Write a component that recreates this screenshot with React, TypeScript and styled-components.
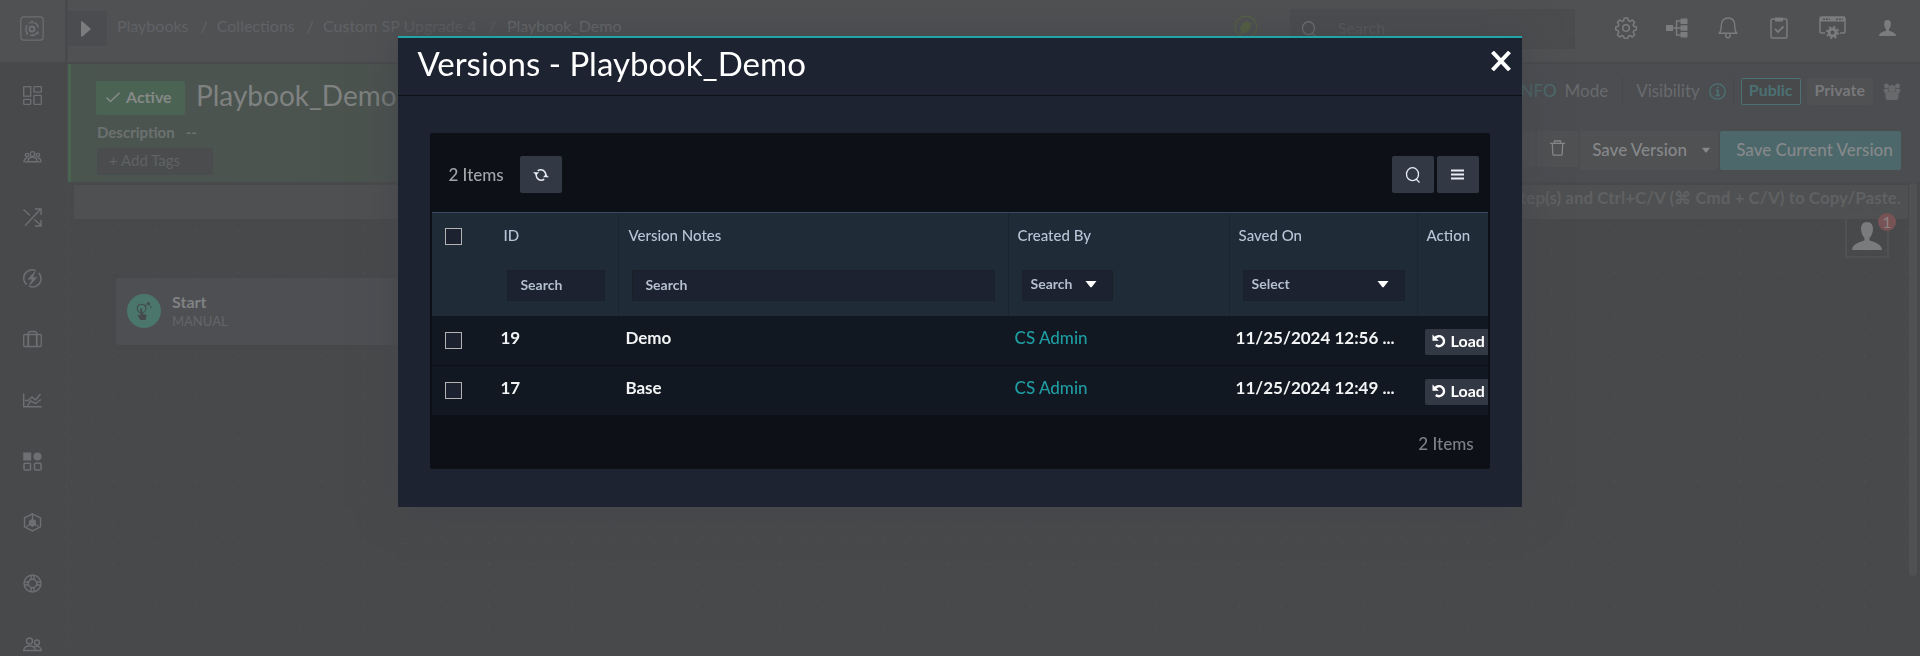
import React from "react";
import styled, { createGlobalStyle } from "styled-components";

const GlobalStyle = createGlobalStyle`
  * { box-sizing: border-box; }
  html, body, #root { height: 100%; }
  body {
    margin: 0;
    overflow: hidden;
    background: #48494b;
    color: #8b8c8e;
    font-family: Lato, "Liberation Sans", sans-serif;
    font-size: 16px;
    line-height: 20px;
  }
  button, input, select { font: inherit; color: inherit; margin: 0; }
  button { cursor: pointer; }
  svg { display: block; flex: none; }
`;

/* ---------- application frame ---------- */

const Frame = styled.div`
  display: flex;
  min-height: 100%;
  height: 100vh;
`;

const Sidebar = styled.nav`
  flex: none;
  width: 68px;
  display: flex;
  flex-direction: column;
  background: #48494b;
  border-right: 1px solid #4a4b4e;
  overflow: hidden;
`;

const LogoLink = styled.a`
  flex: none;
  display: flex;
  align-items: center;
  height: 62px;
  padding: 0 0 5px 20px;
  width: 65px;
  background: #505153;
  color: #6d6f72;
`;

const NavList = styled.ul`
  list-style: none;
  margin: 0;
  padding: 3px 0 0;
  color: #6d6f73;
`;

const NavLink = styled.a`
  display: flex;
  align-items: center;
  justify-content: center;
  width: 65px;
  height: 61px;
  color: inherit;
`;

const Main = styled.div`
  flex: 1;
  min-width: 0;
  display: flex;
  flex-direction: column;
`;

const TopBar = styled.header`
  flex: none;
  display: flex;
  align-items: flex-start;
  height: 62px;
  background: #505153;
`;

const ExpandButton = styled.button`
  display: flex;
  align-items: center;
  width: 39px;
  height: 35px;
  margin-top: 11px;
  padding: 0 0 0 13px;
  border: 0;
  border-radius: 0 2px 2px 0;
  background: #4b4c50;
  color: #7b7c7e;
`;

const Breadcrumb = styled.nav`
  display: flex;
  gap: 9px;
  margin: 16px 0 0 10px;
  color: #606265;
  white-space: nowrap;
  a { color: inherit; text-decoration: none; }
`;

const Crumb = styled.a`
  margin-right: 3px;
`;

const Current = styled.span`
  margin-left: 2px;
  color: #6c6e70;
`;

const StatusBadge = styled.span`
  margin: 15px 32px 0 auto;
  color: #586640;
`;

const GlobalSearch = styled.label`
  display: flex;
  align-items: center;
  width: 285px;
  height: 40px;
  margin-top: 9px;
  padding-left: 11px;
  border-radius: 2px;
  background: #4b4c4e;
  color: #77787a;
  input {
    width: 200px;
    margin-left: 21px;
    padding: 0 0 2px;
    border: 0;
    outline: 0;
    background: none;
  }
  input::placeholder { color: #5b5c5e; opacity: 1; }
`;

const TopIcons = styled.div`
  display: grid;
  grid-template-columns: repeat(4, 51px) 56px 54px;
  align-items: center;
  justify-items: center;
  height: 55px;
  margin: 0 6px 0 25px;
  color: #7b7c7e;
`;

const IconButton = styled.button`
  display: flex;
  padding: 0;
  border: 0;
  background: none;
  color: inherit;
`;

/* ---------- playbook header ---------- */

const Hero = styled.section`
  flex: none;
  display: flex;
  justify-content: space-between;
  height: 118px;
  margin-top: 2px;
  border-left: 3px solid #4a6451;
  background: linear-gradient(90deg, #4b5550 0, #4b534f 290px, #4c4d51 700px);
`;

const HeroInfo = styled.div`
  padding: 17px 0 0 25px;
`;

const HeroTitleRow = styled.div`
  display: flex;
  align-items: center;
  gap: 11px;
  height: 34px;
`;

const ActiveButton = styled.button`
  display: flex;
  align-items: center;
  gap: 6px;
  width: 89px;
  height: 34px;
  padding: 0 0 2px 10px;
  border: 0;
  border-radius: 2px;
  background: #4a6352;
  color: #858987;
  font-weight: 700;
`;

const HeroTitle = styled.h1`
  margin: 0;
  padding-bottom: 6px;
  color: #7f8281;
  font-size: 28px;
  line-height: 32px;
  font-weight: 400;
`;

const Description = styled.div`
  display: flex;
  gap: 11px;
  margin-top: 7px;
  padding-left: 1px;
  color: #6c716f;
  font-size: 15px;
  font-weight: 700;
`;

const TagInput = styled.input`
  display: block;
  width: 116px;
  height: 27px;
  margin: 6px 0 0 1px;
  padding: 0 0 4px 12px;
  border: 0;
  border-radius: 2px;
  background: #4a4c4d;
  font-size: 15px;
  &::placeholder { color: #606363; opacity: 1; }
`;

const HeroActions = styled.div`
  display: flex;
  flex-direction: column;
  align-items: flex-end;
  padding: 13px 19px 0 0;
`;

const ModeRow = styled.div`
  display: flex;
  align-items: center;
  height: 28px;
  color: #686a6d;
  font-size: 17px;
`;

const ModeLabel = styled.span`
  padding-right: 14px;
  border-right: 1px solid #47484b;
  line-height: 28px;
  em { margin-right: 8px; color: #4b6a6c; font-style: normal; }
`;

const VisibilityLabel = styled.span`
  display: flex;
  align-items: center;
  gap: 9px;
  height: 28px;
  padding: 0 7px 0 13px;
  border-right: 1px solid #47484b;
  svg { color: #4b7173; }
`;

const ChoiceButton = styled.button<{ $selected?: boolean }>`
  height: 27px;
  margin-left: ${(p) => (p.$selected ? 7 : 6)}px;
  padding: 0 7px 2px;
  border: 1px solid ${(p) => (p.$selected ? "#4b7173" : "#505153")};
  border-radius: 2px;
  background: ${(p) => (p.$selected ? "#48494b" : "#505153")};
  color: ${(p) => (p.$selected ? "#4b7173" : "#77787a")};
  font-size: 16px;
  font-weight: 700;
  line-height: 20px;
`;

const TeamsButton = styled(IconButton)`
  margin-left: 10px;
`;

const ActionRow = styled.div`
  display: flex;
  gap: 2px;
  margin-top: 26px;
`;

const ActionButton = styled.button<{ $primary?: boolean; $width: number }>`
  display: flex;
  align-items: center;
  justify-content: center;
  gap: 14px;
  width: ${(p) => p.$width}px;
  height: ${(p) => (p.$width < 60 ? 36 : 39)}px;
  padding: 0 0 2px;
  padding-left: ${(p) => (p.$primary ? 8 : 0)}px;
  border: 0;
  border-radius: 2px;
  background: ${(p) => (p.$primary ? "#4c686a" : "#505153")};
  color: #86888a;
  font-size: 17px;
  font-weight: 500;
  white-space: nowrap;
`;

const SaveVersionButton = styled(ActionButton)`
  justify-content: flex-end;
  padding-right: 7px;
`;

/* ---------- canvas ---------- */

const Canvas = styled.main`
  flex: 1;
  position: relative;
  min-height: 0;
  padding: 3px 12px 0 6px;
`;

const DotGrid = styled.svg`
  position: absolute;
  inset: 0;
  width: 100%;
  height: 100%;
`;

const HintBar = styled.p`
  margin: 0;
  height: 34px;
  padding: 3px 7px 0;
  background: #4f5052;
  color: #606162;
  font-size: 17px;
  font-weight: 700;
  text-align: right;
`;

const NodeCard = styled.article`
  position: absolute;
  left: 48px;
  top: 96px;
  width: 282px;
  height: 67px;
  display: flex;
  align-items: center;
  gap: 11px;
  padding: 0 0 1px 11px;
  border-radius: 2px;
  background: #4e4f53;
  box-shadow: 0 0 4px #47484a;
`;

const NodeIcon = styled.span`
  display: flex;
  align-items: center;
  justify-content: center;
  width: 34px;
  height: 34px;
  border-radius: 50%;
  background: #4a766b;
  color: #454b4b;
`;

const NodeName = styled.div`
  color: #808183;
  font-weight: 700;
`;

const NodeKind = styled.div`
  color: #636568;
  font-size: 13px;
  line-height: 18px;
`;

const UserTile = styled.button`
  position: absolute;
  right: 31px;
  top: 32px;
  width: 44px;
  height: 44px;
  display: flex;
  align-items: center;
  justify-content: center;
  padding: 0;
  border: 2px solid #505153;
  background: none;
  color: #7a7b7c;
`;

const UserCount = styled.span`
  position: absolute;
  right: -9px;
  top: -3px;
  width: 18px;
  height: 18px;
  border-radius: 50%;
  background: #775356;
  color: #8e8184;
  line-height: 18px;
  text-align: center;
`;

const ScrollThumb = styled.div`
  position: absolute;
  right: 3px;
  top: 1px;
  width: 8px;
  height: 83%;
  border-radius: 4px;
  background: #505153;
`;

/* ---------- dialog ---------- */

const Overlay = styled.div`
  position: fixed;
  inset: 0;
  padding-top: 36px;
`;

const Dialog = styled.section`
  width: 58.5%;
  min-width: 900px;
  margin: 0 auto;
  border-top: 2px solid #20a4a9;
  background: #1d2330;
  box-shadow: 0 0 36px #44464a;
`;

const DialogHeader = styled.header`
  display: flex;
  align-items: flex-start;
  justify-content: space-between;
  height: 58px;
  padding: 7px 11px 0 19px;
  border-bottom: 1px solid #0d1117;
  color: #fff;
`;

const DialogTitle = styled.h2`
  margin: 0;
  font-size: 33px;
  line-height: 36px;
  font-weight: 400;
`;

const CloseButton = styled(IconButton)`
  margin-top: 6px;
`;

const DialogBody = styled.div`
  padding: 37px 32px 38px;
`;

const Panel = styled.div`
  padding: 0 2px;
  border-radius: 2px;
  background: #0d1117;
`;

const Toolbar = styled.div`
  display: flex;
  align-items: center;
  gap: 3px;
  height: 79px;
  padding: 4px 9px 0 16px;
  color: #a3a5a8;
`;

const Count = styled.span`
  margin-right: auto;
  display: flex;
  align-items: center;
  gap: 16px;
  font-size: 17px;
  line-height: 22px;
  font-weight: 500;
`;

const ToolButton = styled.button`
  display: flex;
  align-items: center;
  justify-content: center;
  width: 42px;
  height: 37px;
  padding: 0;
  border: 0;
  border-radius: 2px;
  background: #323945;
  color: #e8eef4;
`;

const TableClip = styled.div`
  overflow: hidden;
  border-top: 1px solid #3a4a63;
`;

const Table = styled.table`
  width: 100%;
  table-layout: fixed;
  border-collapse: separate;
  border-spacing: 0;
  text-align: left;
`;

const HeadCell = styled.th<{ $line?: boolean }>`
  height: 103px;
  padding: 12px 13px 0 9px;
  border-right: 1px solid ${(p) => (p.$line ? "#1b2531" : "#202b38")};
  background: #202b38;
  color: #b8c5d7;
  font-size: 15px;
  font-weight: 500;
  line-height: 20px;
  vertical-align: top;
  white-space: nowrap;
`;

const Filter = styled.div<{ $width?: number }>`
  position: relative;
  width: ${(p) => (p.$width ? p.$width + "px" : "auto")};
  margin: 25px 0 0 4px;
  svg {
    position: absolute;
    right: 16px;
    top: 10px;
    color: #fff;
    pointer-events: none;
  }
`;

const filterBox = `
  display: block;
  width: 100%;
  height: 31px;
  border: 1px solid #1a2028;
  outline: 0;
  background: #1c2230;
  color: #b4bfd0;
  font-size: 14px;
  font-weight: 700;
`;

const FilterInput = styled.input`
  ${filterBox}
  padding: 0 0 3px 12px;
  &::placeholder { color: #b4bfd0; opacity: 1; }
`;

const FilterSelect = styled.select`
  ${filterBox}
  appearance: none;
  padding: 0 0 3px 8px;
  border-radius: 2px;
`;

const Cell = styled.td`
  height: 50px;
  padding: 0 0 5px 6px;
  border-bottom: 1px solid #0d1117;
  background: #121821;
  color: #f2f3f4;
  font-size: 17px;
  font-weight: 700;
  white-space: nowrap;
  a { color: #1f9ca2; font-weight: 500; text-decoration: none; }
`;

const CheckCell = styled(Cell)`
  padding: 0 0 0 13px;
`;

const CheckHead = styled(HeadCell)`
  padding: 15px 0 0 13px;
`;

const Check = styled.input`
  appearance: none;
  display: block;
  width: 17px;
  height: 17px;
  border: 1px solid #b3b3b3;
  background: #1c2230;
`;

const LoadCell = styled(Cell)`
  padding: 0 0 0 7px;
  overflow: hidden;
`;

const LoadButton = styled.button`
  display: flex;
  align-items: center;
  gap: 4px;
  width: 72px;
  height: 26px;
  margin-top: 3px;
  padding: 0 0 2px 7px;
  border: 0;
  border-radius: 2px;
  background: #323945;
  color: #fff;
  font-size: 16px;
`;

const PanelFooter = styled.footer`
  height: 53px;
  padding: 18px 14px 0;
  color: #7d8084;
  font-size: 17px;
  font-weight: 500;
  text-align: right;
`;

/* ---------- icons ---------- */

const stroke = { fill: "none", stroke: "currentColor" } as const;

const Caret = ({ w = 12, h = 8 }: { w?: number; h?: number }) => (
  <svg width={w} height={h} viewBox="0 0 12 8" fill="currentColor"><path d="M0.5 1h11L6.600 7.300h-1.200z" /></svg>
);

const Logo = () => (
  <svg width="24" height="25" viewBox="0 0 24 25" {...stroke}>
    <rect x="0.8" y="0.8" width="22.400" height="23.400" rx="3" strokeWidth="1.200" />
    <circle cx="12" cy="13" r="2.500" strokeWidth="2" />
    <path d="M7.600 17.500a6.500 6.500 0 0 1-.4-8.300M9 7.300a6.500 6.500 0 0 1 1.500-.7M13.500 6.500a6.500 6.500 0 0 1 4.800 5M18 15.500a6.500 6.500 0 0 1-8 3.500M12 4.500v3M6 18.500l2-1.500M18.500 17.500l-1.500-1" strokeWidth="1.600" />
  </svg>
);

const navIcons: { label: string; art: React.ReactNode }[] = [
  { label: "Dashboard", art: <g strokeWidth="1.300"><rect x="0.700" y="0.700" width="7" height="9.500" /><rect x="11" y="0.700" width="7.300" height="5.500" rx="0.500" /><rect x="0.700" y="13.300" width="7" height="5" rx="0.500" /><rect x="11" y="9.300" width="7.300" height="9" rx="0.500" /></g> },
  { label: "Queue", art: <g strokeWidth="1.300"><circle cx="9.500" cy="7" r="2.300" /><circle cx="4" cy="8" r="1.700" /><circle cx="15" cy="8" r="1.700" /><path d="M5 14.700c0-3 1.500-4.700 4.500-4.700s4.500 1.700 4.500 4.700zM1 14.700c0-2 .8-3.500 3.500-3.700M18 14.700c0-2-.8-3.500-3.500-3.700M0.500 14.900h18" /></g> },
  { label: "Automation", art: <path strokeWidth="1.400" d="M0.500 1.500l6.500 6M2 17.800L17.500 1.200M12 1h6v6M11.500 11.500l6.500 6M18 12v6h-6" /> },
  { label: "Response", art: <g strokeWidth="1.500"><path d="M12.500 1.600A8.300 8.300 0 0 0 3.800 15.600M15.600 3.800A8.300 8.300 0 0 1 6.500 17.300" /><path d="M13.500 0.500L4.500 10.500h4.500L5 18.500 14.500 8.300H10z" fill="currentColor" stroke="none" /></g> },
  { label: "Assets", art: <g strokeWidth="1.300"><rect x="0.700" y="4.500" width="17.600" height="12" rx="1" /><path d="M5 16.500V4.500c0-2.500 1-3 2.500-3h4c1.500 0 2.500.5 2.500 3v12M5.500 4.500v12M13.500 4.500v12" /></g> },
  { label: "Reports", art: <path strokeWidth="1.400" d="M0.700 2.500v13.300h18M4.500 15l3-5 5 2.500 5.500-4M2 9.500h3l4-3.500 3.500 3 5-6" /> },
  { label: "Widgets", art: <g strokeWidth="1.500"><path d="M0.200 0.500h8v8h-8z" fill="currentColor" stroke="none" /><circle cx="14.500" cy="4.500" r="4" fill="currentColor" stroke="none" /><rect x="1" y="11.200" width="6.500" height="6.800" rx="1" /><rect x="11.500" y="11.200" width="6.500" height="6.800" rx="1" /></g> },
  { label: "Content", art: <g strokeWidth="1.400"><path d="M9.500 0.900l8 4v9l-8 4-8-4v-9z" /><path d="M9.500 1v9M9.500 10l-6 3.500M9.500 10l6 3.500" /><path d="M9.500 6.500l2.800 1.600v3.500l-2.800 1.500-2.800-1.500V8.100z" fill="currentColor" /></g> },
  { label: "Help", art: <g strokeWidth="1.400"><circle cx="9.500" cy="9.500" r="8.500" /><circle cx="9.500" cy="9.500" r="4.200" /><path d="M8 1v4.500M11 1v4.500M8 13.500V18M11 13.500V18M1 8h4.500M1 11h4.500M13.500 8H18M13.500 11H18" /></g> },
  { label: "Users", art: <g strokeWidth="1.400"><circle cx="6.500" cy="6" r="3" /><circle cx="14" cy="7.500" r="2.500" /><path d="M0.800 15.500c0-3 2-4.500 5.700-4.500s5.700 1.500 5.700 4.500zM11.500 11.500c4-.8 6.800.8 6.800 4h-6" /></g> },
];

const Person = ({ w, h }: { w: number; h: number }) => (
  <svg width={w} height={h} viewBox="0 0 30 28" fill="currentColor" preserveAspectRatio="none">
    <path d="M15 0c4.200 0 6 2.800 6 7 0 3.500-1.500 7-3.500 9v2.200c3 1.800 12.500 3 12.500 9.800H0c0-6.800 9.500-8 12.500-9.800V16C10.500 14 9 10.500 9 7c0-4.200 1.800-7 6-7z" />
  </svg>
);

const Magnifier = ({ s = 16 }: { s?: number }) => (
  <svg width={s} height={s} viewBox="0 0 16 16" {...stroke} strokeWidth="1.300">
    <ellipse cx="7.500" cy="7.200" rx="6" ry="6.500" /><path d="M11 12l3.500 3.500" />
  </svg>
);

const Gear = () => (
  <svg width="22" height="22" viewBox="0 0 22 22" {...stroke} strokeWidth="1.500">
    <circle cx="11" cy="11" r="3.300" />
    <path strokeLinejoin="round" d="M9.300 1h3.400l.7 2.800 1.500.6 2.500-1.500 2.200 2.300-1.400 2.500.6 1.500 2.700.7v3l-2.700.8-.6 1.500 1.400 2.500-2.200 2.300-2.500-1.500-1.500.6-.7 2.400H9.300l-.7-2.400-1.500-.6L4.600 20l-2.200-2.300 1.400-2.500-.6-1.500L.800 12.900v-3l2.400-.7.6-1.500-1.400-2.500 2.200-2.300 2.500 1.500 1.500-.6z" />
  </svg>
);

const Tree = () => (
  <svg width="22" height="20" viewBox="0 0 22 20">
    <path fill="currentColor" d="M0 7h7v6H0zM14.500 0.500h7v5.500h-7zM14.500 7.200h7v5.500h-7zM14.500 13.900h7v5.500h-7z" />
    <path {...stroke} strokeWidth="1.400" d="M7 10h8M15 3h-4.500v14H15" />
  </svg>
);

const Bell = () => (
  <svg width="20" height="22" viewBox="0 0 20 22" {...stroke} strokeWidth="1.400">
    <path strokeLinejoin="round" d="M1 16.300c2-1.800 2.300-3.800 2.300-7.800C3.300 3.800 6 1 10 1s6.700 2.800 6.700 7.500c0 4 .3 6 2.300 7.800z" />
    <path d="M7.800 17v1.500a2.200 2.200 0 0 0 4.400 0V17" />
  </svg>
);

const Clipboard = () => (
  <svg width="18" height="22" viewBox="0 0 18 22" {...stroke} strokeWidth="1.500">
    <rect x="1" y="2" width="16" height="19" rx="1.500" />
    <path d="M5 0.500h8v4H5z" fill="currentColor" stroke="none" /><path d="M5 12l3 3 5.500-5.500" strokeWidth="1.800" />
  </svg>
);

const WindowGear = () => (
  <svg width="27" height="23" viewBox="0 0 27 23" {...stroke} strokeWidth="1.500">
    <path d="M6 17H2.500c-1 0-1.500-.5-1.500-1.500V2.500C1 1.500 1.500 1 2.500 1h22c1 0 1.500.5 1.500 1.500v13c0 1-.5 1.500-1.500 1.500H21" />
    <path d="M1 1h25v4.500H1z" fill="currentColor" stroke="none" /><path d="M4 3.200h7M17 3.200h7" stroke="#505153" strokeDasharray="2 1" />
    <circle cx="13.500" cy="16.500" r="3.400" strokeWidth="2.800" />
    <circle cx="13.500" cy="16.500" r="5.600" strokeWidth="2" strokeDasharray="2.200 2.200" />
  </svg>
);

const Plug = () => (
  <svg width="24" height="24" viewBox="0 0 24 24">
    <circle cx="12" cy="12" r="10.800" {...stroke} strokeWidth="1.200" />
    <path fill="currentColor" d="M8.500 9l1.500-2 1 1 1.500-2.500 1.300.8-.5 2.200 2.700-1.500 1 1.500-1.500 2 2 .2-.3 1.800-1.700.5c0 3-2 5-5 5-1.500 0-2.300.5-2.800 1.500l-1.200-.8.800-1.700C5.500 15 6 11.500 8.500 9z" />
  </svg>
);

const Group = () => (
  <svg width="18" height="17" viewBox="0 0 18 17" fill="#68696b">
    <circle cx="3.500" cy="3" r="2.500" /><circle cx="14.500" cy="3" r="2.500" /><circle cx="9" cy="5.500" r="3.500" />
    <path d="M0.500 6h5v4.500h-4zM12.500 6h5l-1 4.500h-4zM2.500 12c0-3 3-3.500 6.500-3.500s6.500.5 6.500 3.500v3.500l-1.500 1.500H4l-1.500-1.500z" />
  </svg>
);

const Stop = () => (
  <svg width="14" height="14" viewBox="0 0 14 14"><rect x="1" y="1" width="12" height="12" rx="1" fill="#6b5558" /></svg>
);

const Trash = () => (
  <svg width="15" height="16" viewBox="0 0 15 16" {...stroke} strokeWidth="1.300">
    <path d="M0 3.300h15M4.500 3V1h6v2M2.300 3.500l.5 10.500c0 .8.400 1.200 1.200 1.200h7c.8 0 1.200-.4 1.200-1.200l.5-10.500" />
  </svg>
);

const Refresh = () => (
  <svg width="16" height="14" viewBox="0 0 16 14">
    <g {...stroke} strokeWidth="1.500"><path d="M3.200 5.500c-.6 3.800 1.800 6.700 5 6.700 1.200 0 2.200-.4 3-1.100M12.800 8.500c.6-3.800-1.800-6.700-5-6.700-1.200 0-2.200.4-3 1.100" /></g>
    <path fill="currentColor" d="M0 4.200h6L3.300 7.300zM10 9.300h6l-3.300-3z" />
  </svg>
);

const Undo = () => (
  <svg width="15" height="14" viewBox="0 0 15 14">
    <path {...stroke} strokeWidth="2.400" d="M3 4.200A5 5 0 1 1 3.800 11" /><path fill="currentColor" d="M0.500 0.500v6.300h6.300z" />
  </svg>
);

const StartArt = () => (
  <svg width="20" height="20" viewBox="0 0 20 20">
    <g {...stroke} strokeWidth="1.100"><circle cx="7.500" cy="7.500" r="4.300" /><path d="M11 5l3-2.500M14.500 3l3.500 4.500" strokeDasharray="2 1" /></g>
    <path fill="currentColor" d="M6.300 7.500h1.800v5l4.400 1.200-.7 5.300H6.300L3.500 14.300l1.200-.6 1.600 1.200z" /><circle cx="14.500" cy="2.500" r="1.600" fill="currentColor" />
  </svg>
);

/* ---------- data ---------- */

const versions = [
  { id: 19, notes: "Demo", by: "CS Admin", saved: "11/25/2024 12:56 ..." },
  { id: 17, notes: "Base", by: "CS Admin", saved: "11/25/2024 12:49 ..." },
];

const topActions = [
  { label: "Settings", icon: <Gear /> },
  { label: "Connections", icon: <Tree /> },
  { label: "Notifications", icon: <Bell /> },
  { label: "Tasks", icon: <Clipboard /> },
  { label: "System", icon: <WindowGear /> },
  { label: "Profile", icon: <Person w={17} h={16} /> },
];

/* ---------- views ---------- */

function VersionsDialog() {
  return (
    <Overlay>
      <Dialog role="dialog" aria-labelledby="versions-title">
        <DialogHeader>
          <DialogTitle id="versions-title">Versions - Playbook_Demo</DialogTitle>
          <CloseButton aria-label="Close">
            <svg width="20" height="20" viewBox="0 0 20 20" {...stroke} strokeWidth="4"><path d="M1.500 1l17 18M18.500 1l-17 18" /></svg>
          </CloseButton>
        </DialogHeader>
        <DialogBody>
          <Panel>
            <Toolbar>
              <Count>2 Items<ToolButton aria-label="Refresh"><Refresh /></ToolButton></Count>
              <ToolButton aria-label="Search"><Magnifier /></ToolButton>
              <ToolButton aria-label="Columns">
                <svg width="13" height="11" viewBox="0 0 13 11" {...stroke} strokeWidth="2"><path d="M0 1.500h13M0 5.500h13M0 9.500h13" /></svg>
              </ToolButton>
            </Toolbar>
            <TableClip>
              <Table>
                <colgroup>
                  <col style={{ width: 62 }} /><col style={{ width: 125 }} /><col />
                  <col style={{ width: 221 }} /><col style={{ width: 188 }} /><col style={{ width: 70 }} />
                </colgroup>
                <thead>
                  <tr>
                    <CheckHead><Check type="checkbox" aria-label="Select all" /></CheckHead>
                    <HeadCell $line>ID<Filter><FilterInput aria-label="Filter ID" placeholder="Search" /></Filter></HeadCell>
                    <HeadCell $line>Version Notes<Filter><FilterInput aria-label="Filter version notes" placeholder="Search" /></Filter></HeadCell>
                    <HeadCell $line>Created By<Filter $width={91}><FilterSelect aria-label="Filter created by"><option>Search</option></FilterSelect><Caret /></Filter></HeadCell>
                    <HeadCell $line>Saved On<Filter $width={162}><FilterSelect aria-label="Filter saved on"><option>Select</option></FilterSelect><Caret /></Filter></HeadCell>
                    <HeadCell>Action</HeadCell>
                  </tr>
                </thead>
                <tbody>
                  {versions.map((v) => (
                    <tr key={v.id}>
                      <CheckCell><Check type="checkbox" aria-label={`Select version ${v.id}`} /></CheckCell>
                      <Cell>{v.id}</Cell>
                      <Cell>{v.notes}</Cell>
                      <Cell><a href="#user">{v.by}</a></Cell>
                      <Cell>{v.saved}</Cell>
                      <LoadCell><LoadButton><Undo />Load</LoadButton></LoadCell>
                    </tr>
                  ))}
                </tbody>
              </Table>
            </TableClip>
            <PanelFooter>2 Items</PanelFooter>
          </Panel>
        </DialogBody>
      </Dialog>
    </Overlay>
  );
}

export default function App() {
  return (
    <>
      <GlobalStyle />
      <Frame>
        <Sidebar>
          <LogoLink href="#home" aria-label="Home"><Logo /></LogoLink>
          <NavList>
            {navIcons.map((n) => (
              <li key={n.label}>
                <NavLink href="#nav" aria-label={n.label}>
                  <svg width="19" height="19" viewBox="0 0 19 19" {...stroke}>{n.art}</svg>
                </NavLink>
              </li>
            ))}
          </NavList>
        </Sidebar>
        <Main>
          <TopBar>
            <ExpandButton aria-label="Expand menu">
              <svg width="10" height="16" viewBox="0 0 10 16" fill="currentColor"><path d="M0 0.500h1.500L10 8l-8.500 7.500H0z" /></svg>
            </ExpandButton>
            <Breadcrumb aria-label="Breadcrumb">
              <Crumb href="#playbooks">Playbooks</Crumb><span>/</span>
              <Crumb href="#collections">Collections</Crumb><span>/</span>
              <Crumb href="#collection">Custom SP Upgrade 4</Crumb><span>/</span>
              <Current>Playbook_Demo</Current>
            </Breadcrumb>
            <StatusBadge><Plug /></StatusBadge>
            <GlobalSearch><Magnifier /><input aria-label="Search" placeholder="Search" /></GlobalSearch>
            <TopIcons>
              {topActions.map((a) => <IconButton key={a.label} aria-label={a.label}>{a.icon}</IconButton>)}
            </TopIcons>
          </TopBar>
          <Hero>
            <HeroInfo>
              <HeroTitleRow>
                <ActiveButton>
                  <svg width="14" height="11" viewBox="0 0 14 11" {...stroke} strokeWidth="1.600"><path d="M0.500 5.500l4 4L13.500 0.800" /></svg>
                  Active
                </ActiveButton>
                <HeroTitle>Playbook_Demo</HeroTitle>
              </HeroTitleRow>
              <Description><span>Description</span><span>--</span></Description>
              <TagInput aria-label="Tags" placeholder="+ Add Tags" />
            </HeroInfo>
            <HeroActions>
              <ModeRow>
                <ModeLabel><em>INFO</em>Mode</ModeLabel>
                <VisibilityLabel>
                  Visibility
                  <svg width="17" height="17" viewBox="0 0 17 17" {...stroke} strokeWidth="1.300"><circle cx="8.500" cy="8.500" r="7.700" /><path d="M6.800 7.300h2v5M6.500 12.500h4.500M8 4.500h1.600" strokeWidth="1.700" /></svg>
                </VisibilityLabel>
                <ChoiceButton $selected>Public</ChoiceButton>
                <ChoiceButton>Private</ChoiceButton>
                <TeamsButton aria-label="Teams"><Group /></TeamsButton>
              </ModeRow>
              <ActionRow>
                <ActionButton $width={41} aria-label="Stop"><Stop /></ActionButton>
                <ActionButton $width={41} aria-label="Delete"><Trash /></ActionButton>
                <SaveVersionButton $width={138}>Save Version<Caret w={10} h={6} /></SaveVersionButton>
                <ActionButton $primary $width={181}>Save Current Version</ActionButton>
              </ActionRow>
            </HeroActions>
          </Hero>
          <Canvas>
            <HintBar>step(s) and Ctrl+C/V (⌘ Cmd + C/V) to Copy/Paste.</HintBar>
            <DotGrid aria-hidden="true">
              <defs>
                <pattern id="dots" x="3" y="6.500" width="41.700" height="41.700" patternUnits="userSpaceOnUse">
                  <path fill="#525355" d="M0 0h1.200v1.200H0zM0 20.500h1.200v1.200H0zM20.500 20.500h1.200v1.200h-1.200z" />
                </pattern>
              </defs>
              <rect width="100%" height="100%" fill="url(#dots)" />
            </DotGrid>
            <NodeCard>
              <NodeIcon><StartArt /></NodeIcon>
              <div><NodeName>Start</NodeName><NodeKind>MANUAL</NodeKind></div>
            </NodeCard>
            <UserTile aria-label="Active users"><Person w={30} h={28} /><UserCount>1</UserCount></UserTile>
            <ScrollThumb />
          </Canvas>
        </Main>
      </Frame>
      <VersionsDialog />
    </>
  );
}
